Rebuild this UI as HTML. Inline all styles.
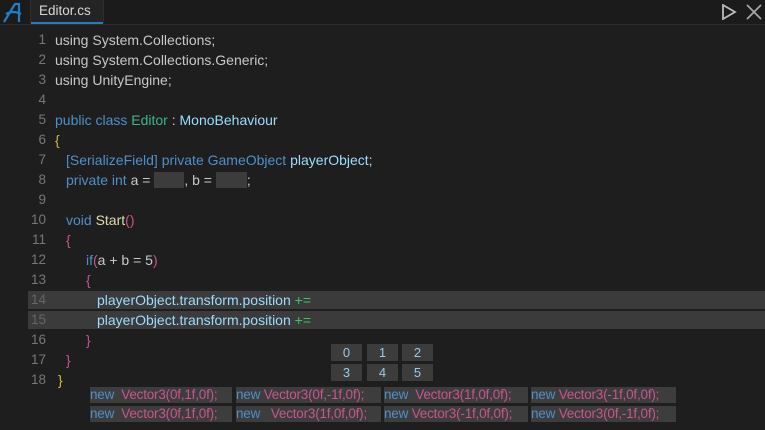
<!DOCTYPE html>
<html><head><style>
*{margin:0;padding:0;box-sizing:border-box}
body{width:765px;height:430px;background:#1e1e1e;overflow:hidden;position:relative;font-family:"Liberation Sans",sans-serif;font-size:14px;color:#c8c8c8;letter-spacing:0}
.top{position:absolute;left:0;top:0;width:765px;height:25px;background:#1b1b1b;border-bottom:1px solid #2c2c2c}
.tab{position:absolute;left:30px;top:0;width:74px;height:23px;background:#242424;border-right:1px solid #2e2e2e;border-left:1px solid #2e2e2e;color:#d8d8d8;font-size:13.5px;line-height:22px;padding-left:8px}
.tab:after{content:"";position:absolute;left:0;right:0;bottom:-1px;height:2px;background:#1f7ec6}
.hl{position:absolute;left:28px;width:737px;height:18px;background:#3b3b3b}
.ln{position:absolute;left:28px;width:18px;text-align:right;color:#777;line-height:20px;font-size:13.5px}
.c{position:absolute;line-height:20px;white-space:pre}
.k{color:#4f8fc9}.t{color:#4ec9b0}.cl{color:#3fb58a}.ty{color:#9cdcfe}.y{color:#d7ba3d}.p{color:#c8558f}.f{color:#dcdcaa}.g{color:#3fc06a}
.ib{display:inline-block;height:16px;background:#3c3c3c;vertical-align:-3px}
.btn{position:absolute;width:31px;height:17px;background:#3c3c3c;color:#9cc8e6;text-align:center;line-height:17px;font-size:13px}
.v{position:absolute;height:16px;background:#3d3d3d;line-height:16px;font-size:13.5px;letter-spacing:-0.2px;white-space:pre;color:#c8558f;overflow:hidden}
.v b{font-weight:normal;color:#4f8fc9}
</style></head><body>
<div class="top"></div>
<svg style="position:absolute;left:3px;top:2px" width="22" height="22" viewBox="0 0 22 22"><path d="M1 20 L12 2 L16 2 L16 20 M3 12 Q10 8 18 12" stroke="#1f7ec6" stroke-width="2.2" fill="none"/></svg>
<div class="tab">Editor.cs</div>
<svg style="position:absolute;left:721px;top:4px" width="16" height="16" viewBox="0 0 16 16"><path d="M2 1 L14 8 L2 15 Z" stroke="#bbb" stroke-width="1.8" fill="none"/></svg>
<svg style="position:absolute;left:746px;top:4px" width="16" height="16" viewBox="0 0 16 16"><path d="M1 1 L15 15 M15 1 L1 15" stroke="#aaa" stroke-width="1.6"/></svg>

<div class="hl" style="top:291px"></div>
<div class="hl" style="top:311px"></div>

<div class="ln" style="top:30px">1</div><div class="ln" style="top:50px">2</div><div class="ln" style="top:70px">3</div><div class="ln" style="top:90px">4</div><div class="ln" style="top:110px">5</div><div class="ln" style="top:130px">6</div><div class="ln" style="top:150px">7</div><div class="ln" style="top:170px">8</div><div class="ln" style="top:190px">9</div><div class="ln" style="top:210px">10</div><div class="ln" style="top:230px">11</div><div class="ln" style="top:250px">12</div><div class="ln" style="top:270px">13</div><div class="ln" style="top:290px;color:#666">14</div><div class="ln" style="top:310px;color:#666">15</div><div class="ln" style="top:330px">16</div><div class="ln" style="top:350px">17</div><div class="ln" style="top:370px">18</div>

<div class="c" style="left:55px;top:30px">using System.Collections;</div>
<div class="c" style="left:55px;top:50px">using System.Collections.Generic;</div>
<div class="c" style="left:55px;top:70px">using UnityEngine;</div>
<div class="c" style="left:55px;top:110px"><span class="k">public class</span> <span class="cl">Editor</span> : <span class="ty">MonoBehaviour</span></div>
<div class="c y" style="left:55px;top:130px">{</div>
<div class="c" style="left:66px;top:150px"><span class="k">[SerializeField] private GameObject</span> <span class="ty">playerObject;</span></div>
<div class="c" style="left:66px;top:170px"><span class="k">private int</span> a = <span class="ib" style="width:30px"></span>, b = <span class="ib" style="width:31px"></span>;</div>
<div class="c" style="left:66px;top:210px"><span class="k">void</span> <span class="f">Start</span><span class="p">()</span></div>
<div class="c p" style="left:66px;top:230px">{</div>
<div class="c" style="left:86px;top:250px"><span class="k">if</span><span class="p">(</span>a + b = 5<span class="p">)</span></div>
<div class="c p" style="left:86px;top:270px">{</div>
<div class="c ty" style="left:97px;top:290px">playerObject.transform.position <span class="g">+=</span></div>
<div class="c ty" style="left:97px;top:310px">playerObject.transform.position <span class="g">+=</span></div>
<div class="c p" style="left:86px;top:330px">}</div>
<div class="c p" style="left:66px;top:350px">}</div>
<div class="c y" style="left:58px;top:370px">}</div>

<div class="btn" style="left:331px;top:344px">0</div><div class="btn" style="left:367px;top:344px">1</div><div class="btn" style="left:402px;top:344px">2</div>
<div class="btn" style="left:331px;top:364px">3</div><div class="btn" style="left:367px;top:364px">4</div><div class="btn" style="left:402px;top:364px">5</div>

<div class="v" style="left:90px;top:387px;width:142px"><b>new</b>  Vector3(0f,1f,0f);</div>
<div class="v" style="left:236px;top:387px;width:145px"><b>new</b> Vector3(0f,-1f,0f);</div>
<div class="v" style="left:384px;top:387px;width:144px"><b>new</b>  Vector3(1f,0f,0f);</div>
<div class="v" style="left:531px;top:387px;width:145px"><b>new</b> Vector3(-1f,0f,0f);</div>
<div class="v" style="left:90px;top:406px;width:142px"><b>new</b>  Vector3(0f,1f,0f);</div>
<div class="v" style="left:236px;top:406px;width:145px"><b>new</b>   Vector3(1f,0f,0f);</div>
<div class="v" style="left:384px;top:406px;width:144px"><b>new</b> Vector3(-1f,0f,0f);</div>
<div class="v" style="left:531px;top:406px;width:145px"><b>new</b> Vector3(0f,-1f,0f);</div>
</body></html>
